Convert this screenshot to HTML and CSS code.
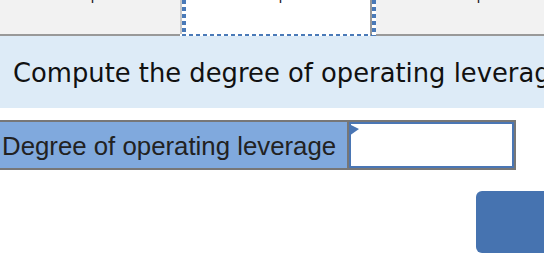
FILE: index.html
```html
<!DOCTYPE html>
<html lang="en">

<head>
    <meta charset="UTF-8">
    <meta name="viewport" content="width=device-width, initial-scale=1.0">
    <title>Degree of operating leverage</title>
    <link rel="stylesheet" href="styles.css">
</head>

<body>
    <div class="tabs">
        <div class="tab"><span class="tab-label">Req 1</span></div>
        <div class="tab tab-active"><span class="tab-label">Req 2</span></div>
        <div class="tab tab-last"><span class="tab-label">Req 3</span></div>
    </div>

    <div class="prompt">Compute the degree of operating leverage.</div>

    <div class="answer-row">
        <div class="label-cell">Degree of operating leverage</div>
        <div class="input-cell">
            <svg class="marker" width="10" height="12" viewBox="0 0 10 12">
                <polygon points="0,0 10,5 0,12" fill="#4a76b4" />
            </svg>
        </div>
    </div>

    <div class="footer">
        <button class="btn-next"></button>
    </div>
</body>

</html>
```

FILE: styles.css
```css
body {
    margin: 0;
    width: 544px;
    height: 254px;
    overflow: hidden;
    background-color: #fff;
    font-family: 'Liberation Sans', Arial, sans-serif;
}

.tabs {
    display: flex;
    height: 36px;
}

.tab {
    flex: none;
    width: 180px;
    box-sizing: border-box;
    background-color: #f2f2f2;
    border-bottom: 2px solid #999;
    text-align: center;
    overflow: hidden;
    padding-right: 6px;
}

.tab-label {
    display: block;
    margin-top: -15px;
    line-height: 20px;
    font-size: 14px;
    color: #111;
}

.tab-active {
    width: 196px;
    border-bottom: none;
    background:
        repeating-linear-gradient(to bottom, #4a7ab8 0 4px, transparent 4px 7px) 2px 0 / 4px 34px no-repeat,
        repeating-linear-gradient(to bottom, #4a7ab8 0 4px, transparent 4px 7px) 192px 0 / 4px 36px no-repeat,
        repeating-linear-gradient(to right, #4a7ab8 0 4px, transparent 4px 7px) 2px 34px / 190px 2px no-repeat,
        linear-gradient(#c8c8c8, #c8c8c8) 0 0 / 2px 34px no-repeat,
        linear-gradient(#999, #999) 190px 0 / 2px 36px no-repeat,
        #fff;
}

.tab-last {
    width: 200px;
}

.prompt {
    height: 72px;
    box-sizing: border-box;
    padding: 22px 0 0 13px;
    background-color: #ddebf7;
    font-family: 'DejaVu Sans', Verdana, sans-serif;
    font-size: 25.8px;
    line-height: 30px;
    color: #111;
    white-space: nowrap;
    overflow: hidden;
}

.answer-row {
    display: flex;
    margin: 12px 0 0 -2px;
    width: 518px;
    height: 50px;
    box-sizing: border-box;
    border: 2px solid #777;
}

.label-cell {
    width: 345px;
    flex: none;
    background-color: #80a9dd;
    border-right: 2px solid #777;
    padding: 4px 0 0 2px;
    box-sizing: content-box;
    font-size: 25.8px;
    line-height: 40px;
    color: #222;
    white-space: nowrap;
    overflow: hidden;
}

.input-cell {
    flex: 1;
    position: relative;
    border: 2px solid #4a76b4;
    background-color: #fff;
}

.marker {
    position: absolute;
    left: -2px;
    top: 0;
}

.footer {
    display: flex;
    justify-content: flex-end;
    margin-top: 21px;
}

.btn-next {
    width: 80px;
    height: 62px;
    margin-right: -12px;
    border: none;
    border-radius: 6px;
    background-color: #4673b0;
}
```
